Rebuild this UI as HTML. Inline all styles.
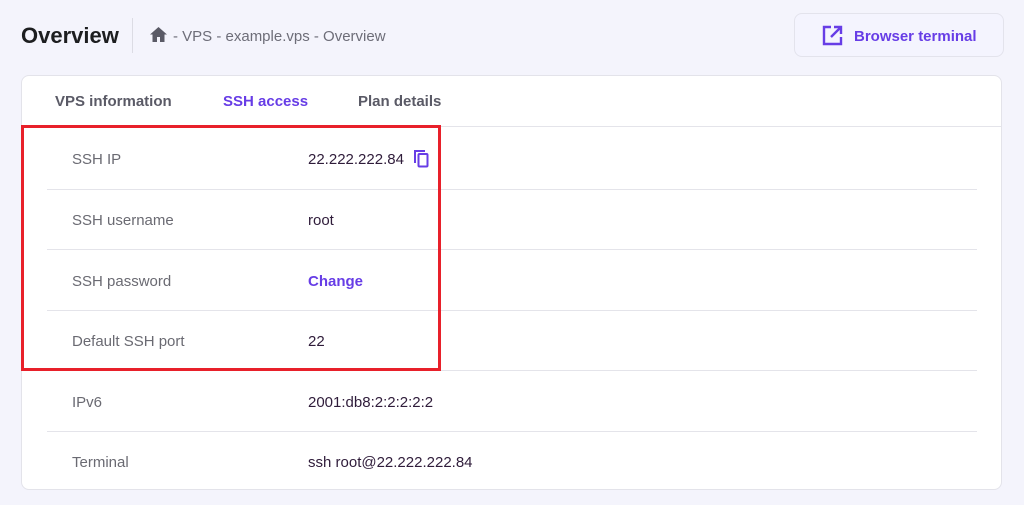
<!DOCTYPE html>
<html><head><style>
body{margin:0;width:1024px;height:505px;background:#f4f4fc;font-family:"Liberation Sans",sans-serif;position:relative;overflow:hidden}
.a{position:absolute}
.card{left:21px;top:75px;width:981px;height:415px;background:#fff;border:1px solid #e3e3ea;border-radius:8px;box-sizing:border-box}
.tab{top:93px;font-size:15px;font-weight:bold;color:#5a5a66}
.row{left:47px;width:930px;height:1px;background:#e4e4ea}
.lab{left:72px;font-size:15px;color:#6a6a72}
.val{left:308px;font-size:15px;color:#2f1c3a}
</style></head><body>
<div class="a" style="left:21px;top:23px;font-size:22px;font-weight:bold;color:#1d1e20">Overview</div>
<div class="a" style="left:132px;top:18px;width:1px;height:35px;background:#dcdce4"></div>
<svg class="a" style="left:150px;top:27px" width="17" height="15" viewBox="0 0 17 15"><path d="M8.5 0L0 7.5h2.5V15h4.5v-5h3v5h4.5V7.5H17z" fill="#5a5a66"/></svg>
<div class="a" style="left:173px;top:28px;font-size:15px;color:#6d6d78">- VPS - example.vps - Overview</div>
<div class="a" style="left:794px;top:13px;width:210px;height:44px;border:1px solid #e3e3ec;border-radius:8px;box-sizing:border-box;background:#f4f4fe"></div>
<svg class="a" style="left:822px;top:25px" width="21" height="21" viewBox="0 0 21 21" fill="none" stroke="#673de6" stroke-width="2.4"><path d="M9 2H2v17h17v-7"/><path d="M12 2h7v7M19 2L9 12"/></svg>
<div class="a" style="left:854px;top:28px;font-size:15px;font-weight:bold;color:#673de6">Browser terminal</div>
<div class="a card"></div>
<div class="a tab" style="left:55px">VPS information</div>
<div class="a tab" style="left:223px;color:#673de6">SSH access</div>
<div class="a tab" style="left:358px">Plan details</div>
<div class="a" style="left:22px;top:126px;width:979px;height:1px;background:#e4e4ea"></div>
<div class="a row" style="top:189px"></div>
<div class="a row" style="top:249px"></div>
<div class="a row" style="top:310px"></div>
<div class="a row" style="top:370px"></div>
<div class="a row" style="top:431px"></div>
<div class="a lab" style="top:151px">SSH IP</div><div class="a val" style="top:151px">22.222.222.84</div>
<svg class="a" style="left:413px;top:149px" width="17" height="19" viewBox="0 0 17 19" fill="none" stroke="#673de6" stroke-width="2"><path d="M2 14V2h10"/><rect x="5.5" y="5" width="9" height="12.5" rx="1"/></svg>
<div class="a lab" style="top:212px">SSH username</div><div class="a val" style="top:212px">root</div>
<div class="a lab" style="top:273px">SSH password</div><div class="a val" style="top:273px;color:#673de6;font-weight:bold">Change</div>
<div class="a lab" style="top:333px">Default SSH port</div><div class="a val" style="top:333px">22</div>
<div class="a lab" style="top:394px">IPv6</div><div class="a val" style="top:394px">2001:db8:2:2:2:2:2</div>
<div class="a lab" style="top:454px">Terminal</div><div class="a val" style="top:454px">ssh root@22.222.222.84</div>
<div class="a" style="left:21px;top:125px;width:420px;height:246px;border:3px solid #e8202a;box-sizing:border-box"></div>
</body></html>
